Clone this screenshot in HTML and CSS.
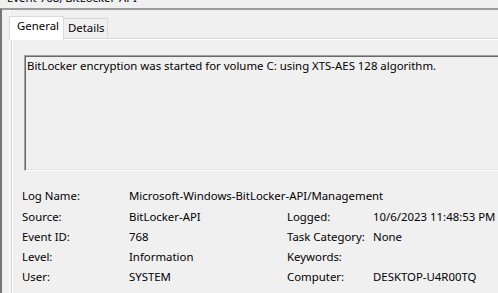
FILE: index.html
```
<!DOCTYPE html>
<html>
<head>
<meta charset="utf-8">
<link rel="stylesheet" href="styles.css">
</head>
<body>
<div class="titlebar"><span class="title">Event 768, BitLocker-API</span></div>
<div class="frame">
  <div class="inner">
    <div class="tabctl">
      <div class="tabstrip">
        <div class="tab tab-active">General</div>
        <div class="tab">Details</div>
      </div>
      <div class="panel">
        <div class="msg">BitLocker encryption was started for volume C: using XTS-AES 128 algorithm.</div>
        <div class="details">
          <div class="lbl">Log Name:</div><div class="val span3">Microsoft-Windows-BitLocker-API/Management</div>
          <div class="lbl">Source:</div><div class="val">BitLocker-API</div><div class="lbl">Logged:</div><div class="val">10/6/2023 11:48:53 PM</div>
          <div class="lbl">Event ID:</div><div class="val">768</div><div class="lbl">Task Category:</div><div class="val">None</div>
          <div class="lbl">Level:</div><div class="val">Information</div><div class="lbl">Keywords:</div><div class="val"></div>
          <div class="lbl">User:</div><div class="val">SYSTEM</div><div class="lbl">Computer:</div><div class="val">DESKTOP-U4R00TQ</div>
        </div>
      </div>
    </div>
  </div>
</div>
</body>
</html>
```
FILE: styles.css
```
html, body {
  margin: 0;
  padding: 0;
}
body {
  width: 498px;
  height: 293px;
  overflow: hidden;
  background: #f0f0f0;
  color: #000;
  font-family: "Noto Sans", "Open Sans", sans-serif;
  font-size: 11.4px;
  line-height: 15px;
}
.titlebar {
  height: 8px;
  overflow: hidden;
  padding-left: 7px;
}
.title {
  display: block;
  line-height: 16px;
  margin-top: -10px;
  white-space: nowrap;
}
.frame {
  border-top: 2px solid #9a9a9a;
  border-left: 2px solid #747474;
  height: 283px;
  padding-left: 7px;
}
.inner {
  height: 283px;
  border-left: 1px solid #fff;
  padding-top: 6px;
  box-sizing: border-box;
}
.tabctl {
  width: 560px;
}
.tabstrip {
  display: flex;
  align-items: flex-end;
  height: 22px;
}
.tab {
  box-sizing: border-box;
  height: 20px;
  padding: 1px 0 0 4px;
  width: 44px;
  border: 1px solid #d9d9d9;
  border-bottom: none;
  border-left: none;
  background: #f0f0f0;
  white-space: nowrap;
}
.tab-active {
  position: relative;
  z-index: 1;
  width: 55px;
  height: 24px;
  margin: 0 0 -2px -1px;
  padding-left: 7px;
  border-left: 1px solid #d9d9d9;
  background: #fff;
}
.panel {
  margin-left: 1px;
  border-top: 1px solid #d9d9d9;
  border-left: 1px solid #d9d9d9;
  box-shadow: inset 1px 1px 0 #fff;
  padding: 16px 0 0 12px;
  height: 260px;
  box-sizing: border-box;
}
.msg {
  box-sizing: border-box;
  height: 116px;
  border-top: 1px solid #a0a0a0;
  border-left: 1px solid #a0a0a0;
  border-bottom: 1px solid #fff;
  border-right: 1px solid #fff;
  box-shadow: inset 1px 1px 0 #696969, inset -1px -1px 0 #e3e3e3;
  padding: 2px 0 0 2px;
  white-space: nowrap;
}
.details {
  display: grid;
  grid-template-columns: 107px 158px 86px auto;
  grid-template-rows: 21px 20px 20px 20px 20px;
  line-height: 20px;
  margin: 15px 0 0 -2px;
  white-space: nowrap;
}
.span3 {
  grid-column: 2 / 5;
}
```
